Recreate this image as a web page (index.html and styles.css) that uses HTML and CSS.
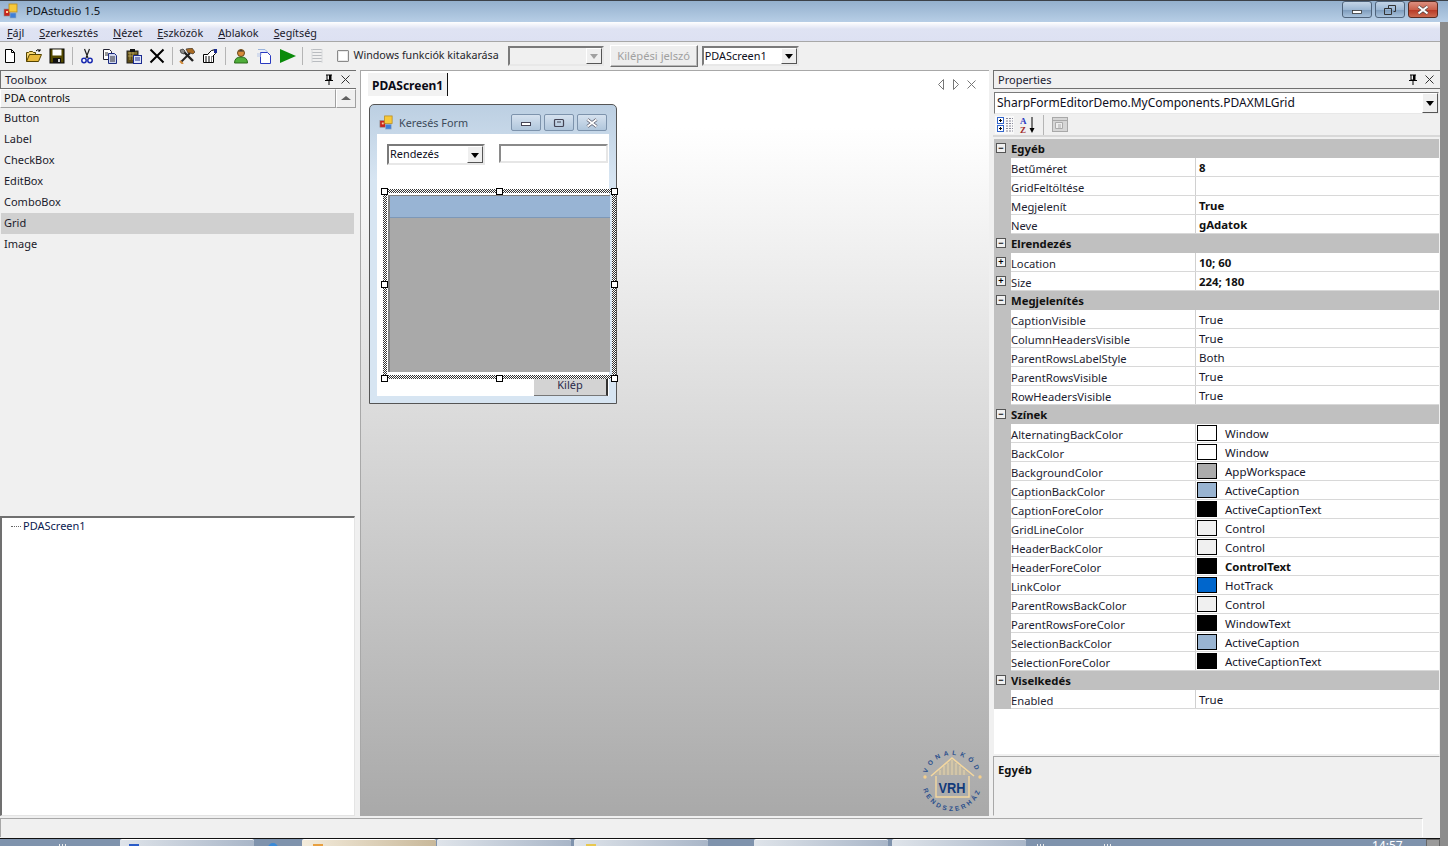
FILE: index.html
```html
<!DOCTYPE html>
<html lang="hu">
<head>
<meta charset="utf-8">
<title>PDAstudio 1.5</title>
<link rel="stylesheet" href="styles.css">
</head>
<body>
<svg class="defs" width="0" height="0">
  <symbol id="i-app" viewBox="0 0 16 16">
    <rect x="1" y="6" width="6" height="7" fill="#c8241c" stroke="#8a8a8a" stroke-width=".6"/><rect x="3" y="8" width="2" height="2" fill="#ffd0a0"/>
    <rect x="6" y="1" width="8" height="8" fill="#f7c93a" stroke="#b88a1a" stroke-width=".8"/>
    <rect x="7" y="10" width="6" height="5" fill="#3f7fd8" stroke="#9ab" stroke-width=".6"/>
  </symbol>
</svg>
<div class="app">
  <div class="frame">
    <header class="titlebar">
      <svg class="title-icon"><use href="#i-app"/></svg>
      <span class="title-text">PDAstudio 1.5</span>
      <div class="winbtns">
        <button class="wb"><svg width="14" height="10"><rect x="2.500" y="5.500" width="9" height="3" fill="#fff" stroke="#333" stroke-width=".8"/></svg></button>
        <button class="wb"><svg width="14" height="12"><path d="M5.500 1.500h7v6h-2M1.500 4.500h7v6h-7z M5.500 1.500v3" fill="none" stroke="#333"/></svg></button>
        <button class="wb wb-close"><svg width="16" height="10"><path d="M3.500 1.500l9 7M12.500 1.500l-9 7" stroke="#444" stroke-width="3.400"/><path d="M3.500 1.500l9 7M12.500 1.500l-9 7" stroke="#fff" stroke-width="2.200"/></svg></button>
      </div>
    </header>
    <nav class="menubar">
      <span><u>F</u>ájl</span><span><u>S</u>zerkesztés</span><span><u>N</u>ézet</span><span><u>E</u>szközök</span><span><u>A</u>blakok</span><span><u>S</u>egítség</span>
    </nav>
    <div class="toolbar">
      <svg class="tb" viewBox="0 0 16 16"><path d="M3.500 1.500h6l3 3v10h-9z" fill="#fff" stroke="#000"/><path d="M9.500 1.500v3h3" fill="none" stroke="#000"/></svg>
      <svg class="tb" viewBox="0 0 16 16"><path d="M.500 13.500v-9h2l1-1h3l1 1h2v2" fill="#f7d774" stroke="#554400"/><path d="M.500 13.500l3-7h12l-3 7z" fill="#e8b93a" stroke="#554400"/><path d="M10 3q2-3 4 0M14 1v2h-2" fill="none" stroke="#000"/></svg>
      <svg class="tb" viewBox="0 0 16 16"><rect x="1" y="1" width="14" height="14" fill="#554a00" stroke="#000"/><rect x="3.500" y="1.500" width="9" height="6" fill="#fff"/><rect x="4" y="10" width="8" height="5" fill="#111"/><rect x="9" y="11" width="2" height="3" fill="#ccc"/></svg>
      <i class="sep"></i>
      <svg class="tb" viewBox="0 0 16 16"><path d="M5.500 1l3.500 9M10.500 1l-3.500 9" stroke="#222" stroke-width="1.200"/><circle cx="5" cy="12.500" r="2.200" fill="#fff" stroke="#1a2ab0" stroke-width="1.500"/><circle cx="11" cy="12.500" r="2.200" fill="#fff" stroke="#1a2ab0" stroke-width="1.500"/></svg>
      <svg class="tb" viewBox="0 0 16 16"><path d="M1.500 1.500h6l2 2v8h-8z" fill="#fff" stroke="#223"/><path d="M6.500 5.500h6l2 2v8h-8z" fill="#cfd6ee" stroke="#1a2a80"/><path d="M8 9h5M8 11h5M8 13h5M3 5h3M3 7h3" stroke="#333"/></svg>
      <svg class="tb" viewBox="0 0 16 16"><rect x="1" y="3" width="11" height="12" fill="#5b4a14" stroke="#222"/><rect x="4" y="1" width="5" height="3" fill="#111"/><path d="M2 5h9M2 8h9M4 4v8M7 4v8" stroke="#c9b66a" stroke-width=".7"/><rect x="7.500" y="7.500" width="8" height="8" fill="#dfe4f7" stroke="#1a2a90"/><path d="M9 10h5M9 12h5" stroke="#1a2a90"/></svg>
      <svg class="tb" viewBox="0 0 16 16"><path d="M1.500 1.500l13 13M14.500 1.500l-13 13" stroke="#000" stroke-width="2"/></svg>
      <i class="sep"></i>
      <svg class="tb" viewBox="0 0 16 16"><path d="M3 2l11 11" stroke="#222" stroke-width="2.400"/><path d="M2 14l9-9" stroke="#222" stroke-width="2"/><path d="M7 1l6-1 3 4-2 2-3-1-2 0z" fill="#a86a22" stroke="#222" stroke-width=".6"/><path d="M1 2l3-1 2 2-1 3-3-1z" fill="#888" stroke="#222" stroke-width=".6"/><path d="M1 13l3 3" stroke="#d08a3a" stroke-width="2"/></svg>
      <svg class="tb" viewBox="0 0 16 16"><path d="M1.500 6.500h10v8h-10z" fill="#fff" stroke="#000"/><path d="M3 9h7M3 11h7M3 13h7" stroke="#000" stroke-dasharray="2 1"/><path d="M5.500 6.500l4-4 4-1v4l-3 3" fill="#fff" stroke="#000"/><path d="M12 1h3v4h-3z" fill="#1a2a90"/></svg>
      <i class="sep sep-wide"></i>
      <svg class="tb" viewBox="0 0 16 16"><circle cx="8" cy="5" r="3.500" fill="#d98a3a" stroke="#6a4a1a"/><path d="M5 3.500q3-3 6 0z" fill="#333"/><path d="M1.500 15q0-6 6.500-6t6.500 6z" fill="#4fae3a" stroke="#2a6a1a"/></svg>
      <svg class="tb" viewBox="0 0 16 16"><path d="M2 1.500h7l2 2v3" fill="#e4ecfa" stroke="#9ab4dc"/><path d="M4.500 4.500h7l3 3v8h-10z" fill="#fff" stroke="#2a3ac0"/><path d="M1 6h5M1 8h4" stroke="#b8c8e8"/></svg>
      <svg class="tb" viewBox="0 0 16 16"><path d="M0 1l16 7-16 7z" fill="#0a8a0a"/></svg>
      <i class="sep"></i>
      <svg class="tb" viewBox="0 0 16 16"><path d="M2 1.500h11M3 4.500h10M3 7.500h10M3 10.500h10M3 13.500h10" stroke="#b9bcc0"/><path d="M3 1v14M13 1v14" stroke="#d8dadc"/></svg>
      <span class="check"></span>
      <span class="check-label">Windows funkciók kitakarása</span>
      <span class="combo combo-off"><span class="combo-text"></span><span class="drop drop-off"></span></span>
      <button class="btn-off">Kilépési jelszó</button>
      <span class="combo combo-screen"><span class="combo-text">PDAScreen1</span><span class="drop"></span></span>
    </div>
    <main class="workspace">
      <aside class="left">
        <div class="dock-head"><span>Toolbox</span><span class="dock-btns"><svg width="10" height="11" viewBox="0 0 10 11"><path d="M2 1h6M3 1v5h4V1M1 6.500h8M5 7v4" stroke="#000" fill="none"/><path d="M6 1v5" stroke="#000" stroke-width="2"/></svg><svg width="9" height="9" viewBox="0 0 9 9"><path d="M.5.5l8 8M8.500.5l-8 8" stroke="#333"/></svg></span></div>
        <div class="tool-cat"><span class="tool-cat-name">PDA controls</span><span class="tool-cat-btn"></span></div>
        <ul class="tool-list">
          <li>Button</li><li>Label</li><li>CheckBox</li><li>EditBox</li><li>ComboBox</li><li class="sel">Grid</li><li>Image</li>
        </ul>
        <div class="tree"><span class="tree-dots"></span>PDAScreen1</div>
      </aside>
      <section class="center">
        <div class="tabstrip">
          <span class="tab">PDAScreen1</span>
          <span class="tab-nav">
            <svg width="8" height="11"><path d="M6.500 .5v10l-5-5z" fill="none" stroke="#777"/></svg>
            <svg width="8" height="11"><path d="M1.500 .5v10l5-5z" fill="none" stroke="#777"/></svg>
            <svg width="9" height="9"><path d="M.5.5l8 8M8.500.5l-8 8" stroke="#777"/></svg>
          </span>
        </div>
        <div class="designer">
          <div class="form">
            <div class="form-title">
              <svg class="form-icon"><use href="#i-app"/></svg>
              <span class="form-text">Keresés Form</span>
              <span class="fbtns">
                <span class="fb"><svg width="14" height="8"><rect x="2.500" y="3.500" width="9" height="3" fill="#fff" stroke="#445"/></svg></span>
                <span class="fb"><svg width="14" height="10"><rect x="2.500" y="1.500" width="9" height="7" rx="1" fill="none" stroke="#445" stroke-width="1.200"/><path d="M5 4h4" stroke="#445"/></svg></span>
                <span class="fb"><svg width="14" height="10"><path d="M2.500 1.500l9 7M11.500 1.500l-9 7" stroke="#556" stroke-width="3.200"/><path d="M2.500 1.500l9 7M11.500 1.500l-9 7" stroke="#fff" stroke-width="1.800"/></svg></span>
              </span>
            </div>
            <div class="form-client">
              <div class="form-controls">
                <span class="combo combo-sort"><span class="combo-text">Rendezés</span><span class="drop"></span></span>
                <span class="form-input"></span>
              </div>
              <button class="kilep">Kilép</button>
            </div>
            <div class="grid-control"><div class="grid-caption"></div></div>
            <div class="selection"></div>
            <i class="handle h1"></i><i class="handle h2"></i><i class="handle h3"></i><i class="handle h4"></i><i class="handle h5"></i><i class="handle h6"></i><i class="handle h7"></i><i class="handle h8"></i>
          </div>
          <svg class="logo" viewBox="0 0 64 64" width="64" height="64">
            <defs>
              <path id="arcTop" d="M6 32a26 26 0 0 1 52 0"/>
              <path id="arcBot" d="M2 32a30 30 0 0 0 60 0"/>
            </defs>
            <text class="logo-arc logo-top"><textPath href="#arcTop" startOffset="50%" text-anchor="middle">VONALKÓD</textPath></text>
            <text class="logo-arc logo-bot"><textPath href="#arcBot" startOffset="50%" text-anchor="middle">RENDSZERHÁZ</textPath></text>
            <circle cx="5" cy="28" r="1.700" fill="#f4cf8c"/><circle cx="60" cy="28" r="1.700" fill="#f4cf8c"/>
            <path d="M14 26L32 10l18 16z" fill="#bdb6a4"/>
            <path d="M20 26v-5M24 26v-9M28 26v-12M32 26v-15M36 26v-12M40 26v-9M44 26v-5" stroke="#e8d5ac"/>
            <path d="M11 27L32 9l22 18" fill="none" stroke="#f4d79e" stroke-width="1.600"/>
            <path d="M16 27v21h33V27" fill="none" stroke="#f4d79e" stroke-width="1.400"/>
            <text class="logo-vrh" x="32" y="43.500" text-anchor="middle" textLength="27" lengthAdjust="spacingAndGlyphs">VRH</text>
          </svg>
        </div>
      </section>
      <aside class="right">
        <div class="dock-head"><span>Properties</span><span class="dock-btns"><svg width="10" height="11" viewBox="0 0 10 11"><path d="M2 1h6M3 1v5h4V1M1 6.500h8M5 7v4" stroke="#000" fill="none"/><path d="M6 1v5" stroke="#000" stroke-width="2"/></svg><svg width="9" height="9" viewBox="0 0 9 9"><path d="M.5.5l8 8M8.500.5l-8 8" stroke="#333"/></svg></span></div>
        <div class="combo combo-obj"><span class="combo-text">SharpFormEditorDemo.MyComponents.PDAXMLGrid</span><span class="drop"></span></div>
        <div class="prop-tools">
          <span class="pt pt-on"><svg width="18" height="18" viewBox="0 0 18 18"><rect x="1.500" y="1.500" width="6" height="6" fill="#fff" stroke="#36c"/><rect x="1.500" y="9.500" width="6" height="6" fill="#fff" stroke="#36c"/><path d="M3 4.500h3M4.500 3v3M3 12.500h3M4.500 11v3" stroke="#000"/><path d="M10 2.500h7M10 5h7M10 7.500h7M10 10h7M10 12.500h7M10 15h7" stroke="#889" stroke-dasharray="2 1"/></svg></span>
          <span class="pt"><svg width="18" height="18" viewBox="0 0 18 18"><text class="az az-a" x="1" y="8">A</text><text class="az az-z" x="1" y="17">Z</text><path d="M13 1v13" stroke="#000"/><path d="M10.500 12h5L13 17z" fill="#000"/></svg></span>
          <i class="sep sep-p"></i>
          <span class="pt"><svg width="16" height="15" viewBox="0 0 16 15"><rect x=".5" y=".5" width="15" height="14" fill="#d6d6d6" stroke="#a8a8a8"/><path d="M.5 3.500h15" stroke="#a8a8a8"/><path d="M3.500 5.500h7v6h-7zM6 8h3M6 10h3" fill="#eee" stroke="#aaa"/></svg></span>
        </div>
        <div class="prop-grid" id="grid">
          <div class="cat"><b class="pm">−</b>Egyéb</div>
          <div class="row"><span class="n">Betűméret</span><span class="v b">8</span></div>
          <div class="row"><span class="n">GridFeltöltése</span><span class="v"></span></div>
          <div class="row"><span class="n">Megjelenít</span><span class="v b">True</span></div>
          <div class="row"><span class="n">Neve</span><span class="v b">gAdatok</span></div>
          <div class="cat"><b class="pm">−</b>Elrendezés</div>
          <div class="row"><b class="pm pm-row">+</b><span class="n">Location</span><span class="v b">10; 60</span></div>
          <div class="row"><b class="pm pm-row">+</b><span class="n">Size</span><span class="v b">224; 180</span></div>
          <div class="cat"><b class="pm">−</b>Megjelenítés</div>
          <div class="row"><span class="n">CaptionVisible</span><span class="v">True</span></div>
          <div class="row"><span class="n">ColumnHeadersVisible</span><span class="v">True</span></div>
          <div class="row"><span class="n">ParentRowsLabelStyle</span><span class="v">Both</span></div>
          <div class="row"><span class="n">ParentRowsVisible</span><span class="v">True</span></div>
          <div class="row"><span class="n">RowHeadersVisible</span><span class="v">True</span></div>
          <div class="cat"><b class="pm">−</b>Színek</div>
          <div class="row"><span class="n">AlternatingBackColor</span><span class="v"><i class="sw c-white"></i>Window</span></div>
          <div class="row"><span class="n">BackColor</span><span class="v"><i class="sw c-white"></i>Window</span></div>
          <div class="row"><span class="n">BackgroundColor</span><span class="v"><i class="sw c-app"></i>AppWorkspace</span></div>
          <div class="row"><span class="n">CaptionBackColor</span><span class="v"><i class="sw c-cap"></i>ActiveCaption</span></div>
          <div class="row"><span class="n">CaptionForeColor</span><span class="v"><i class="sw c-black"></i>ActiveCaptionText</span></div>
          <div class="row"><span class="n">GridLineColor</span><span class="v"><i class="sw c-ctl"></i>Control</span></div>
          <div class="row"><span class="n">HeaderBackColor</span><span class="v"><i class="sw c-ctl"></i>Control</span></div>
          <div class="row"><span class="n">HeaderForeColor</span><span class="v b"><i class="sw c-black"></i>ControlText</span></div>
          <div class="row"><span class="n">LinkColor</span><span class="v"><i class="sw c-hot"></i>HotTrack</span></div>
          <div class="row"><span class="n">ParentRowsBackColor</span><span class="v"><i class="sw c-ctl"></i>Control</span></div>
          <div class="row"><span class="n">ParentRowsForeColor</span><span class="v"><i class="sw c-black"></i>WindowText</span></div>
          <div class="row"><span class="n">SelectionBackColor</span><span class="v"><i class="sw c-cap"></i>ActiveCaption</span></div>
          <div class="row"><span class="n">SelectionForeColor</span><span class="v"><i class="sw c-black"></i>ActiveCaptionText</span></div>
          <div class="cat"><b class="pm">−</b>Viselkedés</div>
          <div class="row"><span class="n">Enabled</span><span class="v">True</span></div>
        </div>
        <div class="prop-desc"><b>Egyéb</b></div>
      </aside>
    </main>
    <footer class="statusbar"><div class="status-inner"></div></footer>
  </div>
  <div class="taskbar">
    <i class="dots d1"></i>
    <span class="task t1"><i class="tk-icon ic-blue"></i></span>
    <i class="tk-icon ic-round"></i>
    <span class="task t2 t-active"><i class="tk-icon ic-orange"></i></span>
    <span class="task t3"></span>
    <span class="task t4"><i class="tk-icon ic-yellow"></i></span>
    <span class="task t5"></span>
    <span class="task t6"></span>
    <i class="dots d2"></i><i class="dots d3"></i>
    <span class="clock">14:57</span>
    <span class="show-desktop"></span>
  </div>
</div>
</body>
</html>
```
FILE: styles.css
```css
* { box-sizing: border-box; }
html, body { margin: 0; height: 100%; overflow: hidden; }
body { font: 11px/14px "Noto Sans", "Open Sans", sans-serif; color: #111; background: #f0f0f0; }
.defs { position: absolute; }
.app { width: 1448px; height: 846px; display: flex; flex-direction: column; overflow: hidden; background: #8c8c8c; }
.frame { flex: 1; display: flex; flex-direction: column; min-height: 0; }

.titlebar { height: 22px; flex: none; display: flex; align-items: center; padding: 0 10px 0 3px; background: linear-gradient(#94b0cd, #b7cee6); border-top: 1px solid #3c4148; }
.title-icon { width: 16px; height: 16px; margin-top: -2px; }
.title-text { margin: -2px 0 0 7px; font-size: 11.3px; color: #10161c; }
.winbtns { margin-left: auto; display: flex; gap: 3px; }
.wb { width: 30px; height: 17px; padding: 0; margin-top: -4px; border: 1px solid #4f637a; border-radius: 3px; background: linear-gradient(#c3d4e6 0, #9db8d4 50%, #7f9dbd 55%, #a9c2dc); display: flex; align-items: center; justify-content: center; }
.wb-close { background: linear-gradient(#dc9080 0, #c9604b 50%, #b83a26 55%, #cc6a50); border-color: #5a2a20; }

.menubar { height: 20px; flex: none; display: flex; gap: 15px; padding: 3px 0 0 7px; width: 1440px; background: linear-gradient(#fff 0, #dfe3f3 7px, #dde1f2 100%); border-bottom: 1px solid #a8a8a8; box-shadow: 0 1px 0 #fff; color: #1a1a2a; font-size: 10.8px; }
.menubar span { line-height: 15px; }

.toolbar { height: 28px; flex: none; display: flex; align-items: center; padding: 0; width: 1440px; background: #f0f0f0; }
.tb { width: 16px; height: 16px; margin: 0 5.5px 0 2px; flex: none; }
.sep { width: 1px; height: 18px; background: #b5b5b5; margin: 0 4px 0 1px; flex: none; }
.sep-wide { margin-right: 5px; }
.check { width: 12px; height: 12px; margin-left: 6px; border: 1px solid #8a8a8a; border-radius: 1px; background: #fff; box-shadow: inset 0 0 0 1px #e8e8e8; flex: none; }
.check-label { margin: -2px 0 0 5px; color: #1f1f2a; white-space: nowrap; font-size: 10.7px; }

.combo { display: flex; background: #fff; border: 2px solid; border-color: #7a7a7a #e8e8e8 #e8e8e8 #7a7a7a; align-items: stretch; flex: none; }
.combo-text { flex: 1; padding-left: 1px; white-space: nowrap; line-height: 16px; color: #0e0e20; overflow: hidden; font-size: 10.9px; }
.drop { position: relative; width: 16px; background: #efefef; border: 1px solid; border-color: #fff #555 #555 #fff; flex: none; }
.drop::after { content: ""; position: absolute; left: 3px; top: 50%; margin-top: -2px; border: 4px solid transparent; border-top: 5px solid #000; border-bottom: 0; }
.drop-off::after { border-top-color: #a0a0a0; }
.combo-off { width: 96px; height: 20px; margin-left: 9px; background: #f0f0f0; }
.btn-off { width: 88px; height: 22px; margin-left: 6px; padding: 0; font: inherit; font-size: 11.2px; color: #a0a0a0; background: #eee; border: 1px solid; border-color: #fff #707070 #707070 #fff; box-shadow: inset -1px -1px 0 #b8b8b8; }
.combo-screen { width: 97px; height: 20px; margin-left: 4px; }

.workspace { flex: 1; min-height: 0; display: grid; grid-template-columns: 356px 633px 447px; width: 1440px; background: #f0f0f0; }
.left { display: flex; flex-direction: column; min-height: 0; }
.right { display: flex; flex-direction: column; min-height: 0; margin-left: 4px; width: 447px; }
.center { margin: 0 0 2px 4px; display: flex; flex-direction: column; min-height: 0; border-top: 1px solid #a8a8a8; border-left: 1px solid #a8a8a8; }

.dock-head { height: 19px; flex: none; display: flex; align-items: center; justify-content: space-between; padding: 0 6px 0 4px; border: 1px solid #707070; border-width: 1px 0 1px 1px; background: #f0f0f0; color: #1a2030; font-size: 11.3px; }
.right .dock-head { font-size: 11px; }
.dock-btns { display: flex; gap: 7px; align-items: center; }

.tool-cat { height: 19px; flex: none; display: flex; }
.tool-cat-name { flex: 1; padding-left: 3px; line-height: 16px; border: 1px solid; border-color: #fff #a0a0a0 #a0a0a0 #fff; }
.tool-cat-btn { width: 20px; position: relative; border: 1px solid; border-color: #fff #a0a0a0 #a0a0a0 #fff; }
.tool-cat-btn::after { content: ""; position: absolute; left: 4px; top: 6px; border: 5px solid transparent; border-bottom: 4px solid #606060; border-top: 0; }
.tool-list { list-style: none; margin: 0; padding: 0 1px; flex: 1; min-height: 0; }
.tool-list li { height: 21px; line-height: 20px; padding-left: 3px; color: #1a1a2a; }
.tool-list .sel { background: #d0d0d0; width: 353px; }
.tree { height: 300px; flex: none; width: 355px; margin-bottom: 2px; background: #fff; border: 1px solid; border-width: 2px 1px 1px 2px; border-color: #707070 #e4e4e4 #e4e4e4 #707070; padding: 1px 0 0 9px; display: flex; align-items: center; flex-wrap: wrap; align-content: flex-start; font-size: 11px; color: #0a1a50; }
.tree-dots { width: 10px; border-top: 1px dotted #666; margin-right: 2px; }

.tabstrip { height: 28px; flex: none; background: #fff; display: flex; align-items: flex-start; justify-content: space-between; padding: 2px 13px 0 7px; }
.tab { height: 23px; line-height: 26px; padding: 0 4px; background: #f2f2f2; border-right: 1px solid #111; font-weight: 700; color: #0a0a16; font-size: 12px; }
.tab-nav { display: flex; gap: 7px; align-items: center; height: 23px; }

.designer { flex: 1; min-height: 0; position: relative; background: linear-gradient(#fff 4%, #a9a9a9 100%); }
.form { position: absolute; left: 8px; top: 5px; width: 248px; height: 300px; padding: 0 7px 7px; border: 1px solid #555; border-radius: 5px 5px 0 0; background: linear-gradient(#bccfe2, #d7e5f2 25%); display: flex; flex-direction: column; }
.form-title { height: 29px; flex: none; display: flex; align-items: center; padding-top: 6px; }
.form-icon { width: 15px; height: 15px; margin-left: 2px; }
.form-text { margin-left: 5px; color: #3c4a5a; font-size: 10.8px; }
.fbtns { margin-left: auto; display: flex; gap: 3px; margin-right: 2px; }
.fb { width: 30px; height: 17px; border: 1px solid #7d93ac; border-radius: 2px; background: linear-gradient(#d6e2ef, #b0c6dc); display: flex; align-items: center; justify-content: center; }
.form-client { flex: 1; background: #fff; display: flex; flex-direction: column; justify-content: space-between; }
.form-controls { display: flex; align-items: flex-start; padding: 10px 1px 0 10px; }
.combo-sort { width: 98px; height: 21px; }
.form-input { width: 109px; height: 19px; margin-left: 14px; background: #fff; border: 2px solid; border-color: #8a8a8a #e6e6e6 #e6e6e6 #8a8a8a; }
.kilep { align-self: flex-end; width: 74px; height: 21px; margin-right: 1px; padding: 0; font: inherit; color: #2a2a4a; background: #d3d3d3; border: 0; border-right: 2px solid #333; border-bottom: 1px solid #777; }
.selection { position: absolute; left: 13px; top: 84px; width: 233px; height: 190px; border: 4px solid transparent; background: conic-gradient(#333 25%, #fff 0 50%, #333 0 75%, #fff 0) 0 0/2px 2px; mask: linear-gradient(#000,#000) content-box, linear-gradient(#000,#000); mask-composite: exclude; }
.grid-control { position: absolute; left: 18px; top: 90px; width: 222px; height: 177px; background: #a9a9a9; border-left: 2px solid #808080; border-top: 1px solid #808080; }
.grid-caption { height: 22px; background: #98b4d4; border-bottom: 1px solid #7d98b8; }
.handle { position: absolute; width: 7px; height: 7px; background: #fff; border: 1px solid #000; }
.h1 { left: 11px; top: 83px; } .h2 { left: 126px; top: 83px; } .h3 { left: 241px; top: 83px; }
.h4 { left: 11px; top: 176px; } .h5 { left: 241px; top: 176px; }
.h6 { left: 11px; top: 270px; } .h7 { left: 126px; top: 270px; } .h8 { left: 241px; top: 270px; }
.logo { position: absolute; right: 5px; bottom: 3px; overflow: visible; }
.logo-arc { font-family: "Liberation Sans", sans-serif; font-weight: 700; font-size: 6.5px; fill: #2a4f8c; }
.logo-top { letter-spacing: 3.6px; }
.logo-bot { letter-spacing: 2.6px; font-size: 6.5px; }
.logo-vrh { font: 700 15px "Liberation Sans", sans-serif; fill: #123a7a; }

.combo-obj { height: 22px; margin: 3px 1px 0 1px; border-width: 1px; }
.combo-obj .combo-text { line-height: 20px; padding-left: 2px; font-size: 12px; }
.prop-tools { height: 23px; flex: none; display: flex; align-items: center; padding-left: 1px; gap: 2px; border-bottom: 2px solid #d8d8d8; }
.pt { width: 21px; height: 20px; display: flex; align-items: center; justify-content: center; flex: none; }
.pt-on { background: #f9f9f9; border: 1px solid #f0f0f0; }
.sep-p { height: 20px; margin: 0 3px; }
.az { font: 700 9px "Liberation Serif", serif; }
.az-a { fill: #2a3ac0; } .az-z { fill: #a02a2a; }

.prop-grid { flex: 1; min-height: 0; background: #fff; margin: 2px 0 0 1px; width: 445px; }
.cat, .row { height: 19px; display: flex; align-items: center; position: relative; }
.cat { background: #c0c0c0; font-weight: 700; padding-left: 17px; color: #111; font-size: 11.3px; }
.row { margin-left: 17px; background: #fff; border-bottom: 1px solid #d8d8d8; box-shadow: -17px 0 0 #c0c0c0; }
.n { width: 185px; height: 18px; line-height: 21px; border-right: 1px solid #d0d0d0; flex: none; color: #1d1d30; font-size: 11.2px; }
.v { padding-left: 3px; height: 18px; line-height: 17px; display: flex; align-items: center; color: #16162a; font-size: 11.5px; }
.v.b { font-weight: 700; color: #111; font-size: 11.4px; }
.pm { position: absolute; left: 2px; top: 4px; width: 10px; height: 10px; border: 1px solid #555; background: #f0f0f0; font: 700 9px/8px "Liberation Sans", sans-serif; text-align: center; color: #000; }
.pm-row { left: -15px; }
.sw { width: 20px; height: 16px; margin: 0 8px 0 -2px; border: 1px solid #000; flex: none; }
.c-white { background: #fff; } .c-app { background: #ababab; } .c-cap { background: #99b4d1; }
.c-black { background: #000; } .c-ctl { background: #f0f0f0; } .c-hot { background: #0066cc; }
.prop-desc { height: 60px; flex: none; margin: 2px 0 2px 0; padding: 6px 4px 0; border: 1px solid; border-color: #a8a8a8 transparent transparent #a8a8a8; font-size: 11.3px; }

.statusbar { height: 20px; flex: none; width: 1440px; padding: 0 17px 1px 0; background: #f0f0f0; }
.status-inner { height: 100%; background: #f0f0f0; border-top: 1px solid #a8a8a8; border-left: 1px solid #a8a8a8; border-right: 1px solid #fff; }
.taskbar { height: 8px; flex: none; position: relative; width: 1440px; background: #7f93ad; border-top: 1px solid #111; }
.task { position: absolute; top: 0; height: 8px; width: 134px; border-radius: 2px 2px 0 0; background: linear-gradient(90deg, #dfe4ea, #a9b6c8); border-top: 1px solid #fff; overflow: hidden; }
.t-active { background: linear-gradient(90deg, #f4ecdc, #c8b89a); }
.t1 { left: 120px; } .t2 { left: 302px; } .t3 { left: 437px; } .t4 { left: 574px; } .t5 { left: 754px; } .t6 { left: 892px; }
.tk-icon { position: absolute; top: 4px; width: 10px; height: 6px; }
.ic-blue { left: 9px; background: #2a5cc8; }
.ic-round { left: 268px; background: #3a8ad8; border-radius: 5px 5px 0 0; }
.ic-orange { left: 11px; background: #e8a040; }
.ic-yellow { left: 12px; background: #e8c850; }
.dots { position: absolute; top: 5px; width: 7px; height: 2px; background: repeating-linear-gradient(90deg, #eee 0 1px, transparent 1px 3px); }
.d1 { left: 59px; } .d2 { left: 1037px; } .d3 { left: 1104px; }
.clock { position: absolute; left: 1372px; top: 0; color: #fff; font-size: 12px; line-height: 14px; }
.show-desktop { position: absolute; left: 1426px; top: 0; width: 14px; height: 8px; background: #9a9a9a; border: 1px solid #666; }
```
